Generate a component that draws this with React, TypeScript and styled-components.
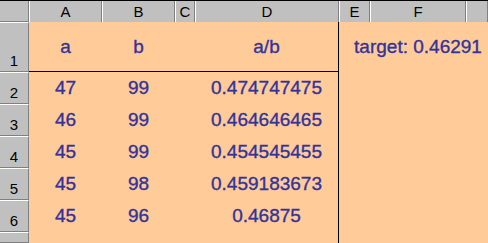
import React from "react";
import styled, { createGlobalStyle, css } from "styled-components";

const GlobalStyle = createGlobalStyle`
  html, body {
    margin: 0;
    padding: 0;
    background: #ffcc99;
    overflow: hidden;
  }
  body {
    font-family: "Liberation Sans", Arial, sans-serif;
  }
`;

const columns = ["A", "B", "C", "D", "E", "F", ""];

const rows: { n: string; a: string; b: string; d: string; f?: string }[] = [
  { n: "1", a: "a", b: "b", d: "a/b", f: "target: 0.46291" },
  { n: "2", a: "47", b: "99", d: "0.474747475" },
  { n: "3", a: "46", b: "99", d: "0.464646465" },
  { n: "4", a: "45", b: "99", d: "0.454545455" },
  { n: "5", a: "45", b: "98", d: "0.459183673" },
  { n: "6", a: "45", b: "96", d: "0.46875" },
  // row 7 only peeks in at the bottom edge
  { n: "", a: "", b: "", d: "" },
];

const App = () => {
  return (
    <>
      <GlobalStyle />
      <Sheet>
        <Corner />
        {columns.map((c, i) => (
          <ColHeader key={i}>{c}</ColHeader>
        ))}
        {rows.map((r, i) => (
          <React.Fragment key={i}>
            <RowHeader>{r.n}</RowHeader>
            <Cell $underline={i === 0}>{r.a}</Cell>
            <Cell $underline={i === 0}>{r.b}</Cell>
            <Cell $underline={i === 0} />
            <Cell $underline={i === 0} $rightRule>
              {r.d}
            </Cell>
            <Cell />
            <Cell>{r.f}</Cell>
            <Cell />
          </React.Fragment>
        ))}
      </Sheet>
    </>
  );
};

const Sheet = styled.div`
  display: grid;
  grid-template-columns: 29px 73px 73px 20px 144px 31px 96px 22px;
  grid-template-rows: 21px 50px repeat(5, 32px) 11px;
  border-top: 1px solid #000;
  width: 488px;
  height: 243px;
  box-sizing: border-box;
`;

const headerBase = css`
  box-sizing: border-box;
  background: #c0c0c0;
  color: #000;
  font-size: 15px;
  display: flex;
  justify-content: center;
`;

const Corner = styled.div`
  ${headerBase};
  border-right: 1px solid #808080;
  border-bottom: 1px solid #808080;
`;

const ColHeader = styled.div`
  ${headerBase};
  align-items: center;
  border-left: 1px solid #fff;
  border-right: 1px solid #808080;
`;

const RowHeader = styled.div`
  ${headerBase};
  align-items: flex-end;
  padding-bottom: 2px;
  border-top: 1px solid #fff;
  border-bottom: 1px solid #808080;
  border-right: 1px solid #808080;
`;

const Cell = styled.div<{ $underline?: boolean; $rightRule?: boolean }>`
  box-sizing: border-box;
  display: flex;
  align-items: center;
  justify-content: center;
  white-space: nowrap;
  color: #333399;
  font-size: 19px;
  -webkit-text-stroke: 0.35px #333399;
  border-bottom: ${(p) => (p.$underline ? "1px solid #000" : "none")};
  border-right: ${(p) => (p.$rightRule ? "1px solid #000" : "none")};
`;

export default App;
